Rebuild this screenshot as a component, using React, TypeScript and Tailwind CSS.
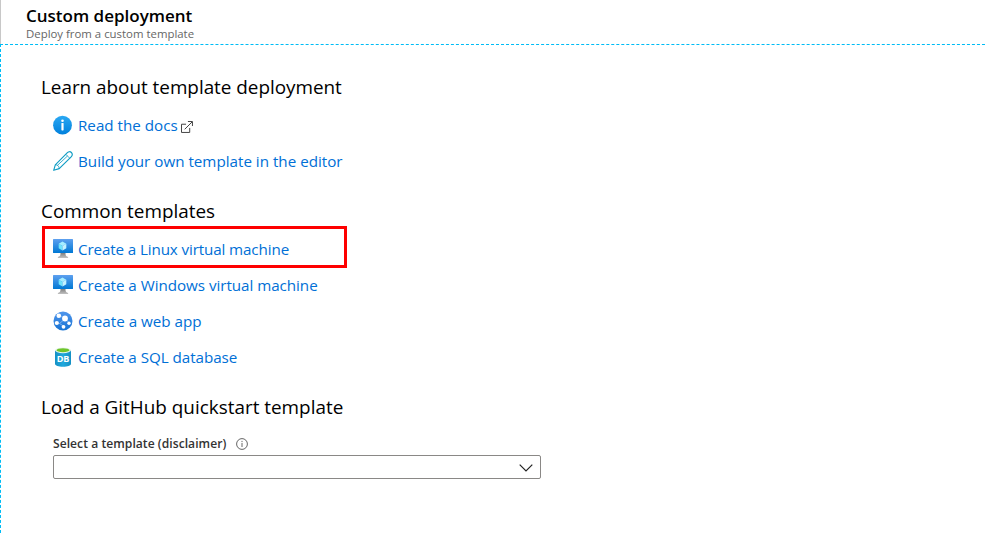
import React from "react";

function InfoIcon() {
  return (
    <svg width="20" height="20" viewBox="0 0 20 20" className="shrink-0">
      <defs>
        <linearGradient id="info" x1="0" y1="0" x2="0" y2="1">
          <stop offset="0" stopColor="#2ba8f3" />
          <stop offset="1" stopColor="#0080dc" />
        </linearGradient>
      </defs>
      <circle cx="9.5" cy="10.2" r="9.4" fill="url(#info)" />
      <circle cx="9.5" cy="5.7" r="1.3" fill="#fff" />
      <rect x="8.4" y="8" width="2.2" height="7.4" rx="0.6" fill="#fff" />
    </svg>
  );
}

function PencilIcon() {
  return (
    <svg width="20" height="20" viewBox="0 0 20 20" className="shrink-0" fill="none" stroke="#0f9cc4" strokeWidth="1.15" strokeLinejoin="round">
      <path d="M0.7 19.3L2.3 13.8L14.4 1.7C15.6 0.5 17.2 0.3 18.4 1.5S19.6 4.4 18.4 5.6L6.2 17.6Z" />
      <path d="M12.8 3.3L16.7 7.2M2.3 13.8C4.5 13.6 6.3 15.2 6.2 17.6M4.5 14.3L14.6 4.9" strokeWidth="0.8" />
    </svg>
  );
}

function VmIcon() {
  return (
    <svg width="20" height="20" viewBox="0 0 20 20" className="shrink-0">
      <defs>
        <linearGradient id="screen" x1="0" y1="0" x2="0" y2="1">
          <stop offset="0" stopColor="#5ea0ef" />
          <stop offset="1" stopColor="#0078d4" />
        </linearGradient>
        <linearGradient id="stand" x1="0" y1="0" x2="0" y2="1">
          <stop offset="0" stopColor="#808080" />
          <stop offset="1" stopColor="#c0c0c0" />
        </linearGradient>
      </defs>
      <rect y="0" width="20" height="14" rx="0.5" fill="url(#screen)" />
      <path d="M7.500 14h5c0 2.600.500 3.600 2.600 3.900v1H4.900v-1C7 17.600 7.500 16.600 7.500 14z" fill="url(#stand)" />
      <path d="M9.500 2.600l3.800 2.200-3.800 2.200-3.800-2.200z" fill="#a5edff" />
      <path d="M5.700 4.800l3.800 2.200v4.400L5.700 9.200z" fill="#6fe4fb" />
      <path d="M13.300 4.800L9.500 7v4.400l3.800-2.200z" fill="#c3f1ff" />
    </svg>
  );
}

function GlobeIcon() {
  return (
    <svg width="20" height="20" viewBox="0 0 20 20" className="shrink-0">
      <defs>
        <linearGradient id="globe" x1="0" y1="0" x2="0" y2="1">
          <stop offset="0" stopColor="#5096ec" />
          <stop offset="1" stopColor="#1672d3" />
        </linearGradient>
      </defs>
      <circle cx="10" cy="10" r="9.500" fill="url(#globe)" />
      <path d="M6 4.500L12.500 7.500L16 12M12.500 7.500L6.500 12.500M3.500 12L6.500 12.500L12 16" fill="none" stroke="#8ebcf3" strokeWidth="0.8" />
      <circle cx="5.800" cy="4.800" r="2.300" fill="#fff" />
      <circle cx="12" cy="7.500" r="2.900" fill="#fff" />
      <circle cx="3.800" cy="12" r="2.100" fill="#fff" />
      <circle cx="16" cy="12.200" r="1.700" fill="#fff" />
      <circle cx="10.500" cy="15.800" r="1.900" fill="#fff" />
    </svg>
  );
}

function DatabaseIcon() {
  return (
    <svg width="20" height="20" viewBox="0 0 20 20" className="shrink-0">
      <defs>
        <linearGradient id="db" x1="0" y1="0" x2="1" y2="0">
          <stop offset="0" stopColor="#1590c4" />
          <stop offset="0.500" stopColor="#20a8dc" />
          <stop offset="1" stopColor="#1590c4" />
        </linearGradient>
      </defs>
      <path d="M2 3.200V17c0 1.500 3.600 2.700 8 2.700s8-1.200 8-2.700V3.200z" fill="url(#db)" />
      <ellipse cx="10" cy="3.300" rx="8" ry="2.900" fill="#e8f6ec" />
      <ellipse cx="10" cy="3.200" rx="6.500" ry="2" fill="#6fc52a" />
      <text x="10" y="15.200" textAnchor="middle" fontSize="9" fontWeight="700" fill="#fff" fontFamily="Open Sans, sans-serif">DB</text>
    </svg>
  );
}

function ExternalIcon() {
  return (
    <svg width="12" height="12" viewBox="0 0 13 13" className="mt-[3px] ml-[3px] shrink-0" fill="none" stroke="#444" strokeWidth="1.080">
      <path d="M5.500 3.500H0.540v8.900h8.900V7.500M4 9L12 1M7.500 0.540h4.900v4.900" />
    </svg>
  );
}

function Row({ icon, children, after, spacing }: { icon: React.ReactNode; children: React.ReactNode; after?: React.ReactNode; spacing: string }) {
  return (
    <div className="flex h-9 items-center pl-3">
      {icon}
      <a className={"ml-[5px] whitespace-nowrap text-[15.2px] text-[#006fd6] " + spacing}>{children}</a>
      {after}
    </div>
  );
}

export default function App() {
  return (
    <div className="flex h-[533px] w-[985px] flex-col overflow-hidden bg-white font-['Open_Sans','Noto_Sans',sans-serif] text-black">
      <header className="h-11 border-l border-[#c8c8c8] pl-[25px]">
        <h1 className="pt-[5px] text-[17px] leading-[22px] font-semibold whitespace-nowrap">Custom deployment</h1>
        <p className="text-[11.4px] leading-[14px] whitespace-nowrap text-[#666]">Deploy from a custom template</p>
      </header>
      <main className="flex-1 border-t border-l border-dashed border-[#00bcf5] pl-10">
        <h2 className="mt-[28px] h-[28px] text-[18.9px] leading-[28px] tracking-[-0.02px] whitespace-nowrap">Learn about template deployment</h2>
        <div className="mt-[6px]">
          <Row icon={<InfoIcon />} spacing="tracking-[0px]" after={<ExternalIcon />}>Read the docs</Row>
          <Row icon={<PencilIcon />} spacing="tracking-[0px]">Build your own template in the editor</Row>
        </div>
        <h2 className="mt-[18px] h-[28px] text-[18.9px] leading-[28px] whitespace-nowrap">Common templates</h2>
        <div className="mt-[1px] ml-px h-[42px] w-[305px] border-[3px] border-[#fe0000] pt-[2px]">
          <div className="-ml-1">
            <Row icon={<VmIcon />} spacing="tracking-[-0.12px]">Create a Linux virtual machine</Row>
          </div>
        </div>
        <div className="-mt-px">
          <Row icon={<VmIcon />} spacing="tracking-[-0.04px]">Create a Windows virtual machine</Row>
          <Row icon={<GlobeIcon />} spacing="tracking-[0px]">Create a web app</Row>
          <Row icon={<DatabaseIcon />} spacing="tracking-[-0.04px]">Create a SQL database</Row>
        </div>
        <h2 className="mt-[18px] h-[28px] text-[18.9px] leading-[28px] whitespace-nowrap">Load a GitHub quickstart template</h2>
        <div className="mt-[13px] ml-3 flex h-5 items-center">
          <label className="text-[12.1px] font-semibold tracking-[0.04px] whitespace-nowrap text-[#333]">Select a template (disclaimer)</label>
          <svg width="12" height="12" viewBox="0 0 12 12" className="ml-[10px]" fill="none" stroke="#555" strokeWidth="0.900">
            <circle cx="6" cy="6" r="5.400" />
            <path d="M6 5v4M6 2.900v1.200" />
          </svg>
        </div>
        <div className="mt-[1px] ml-3 flex h-6 w-[488px] items-center justify-end rounded-[2px] border border-[#8a8886] pr-[7px]">
          <svg width="14" height="8" viewBox="0 0 14 8" className="mt-px" fill="none" stroke="#222" strokeWidth="1.200">
            <path d="M0.700 0.700L7 7L13.300 0.700" />
          </svg>
        </div>
      </main>
    </div>
  );
}
